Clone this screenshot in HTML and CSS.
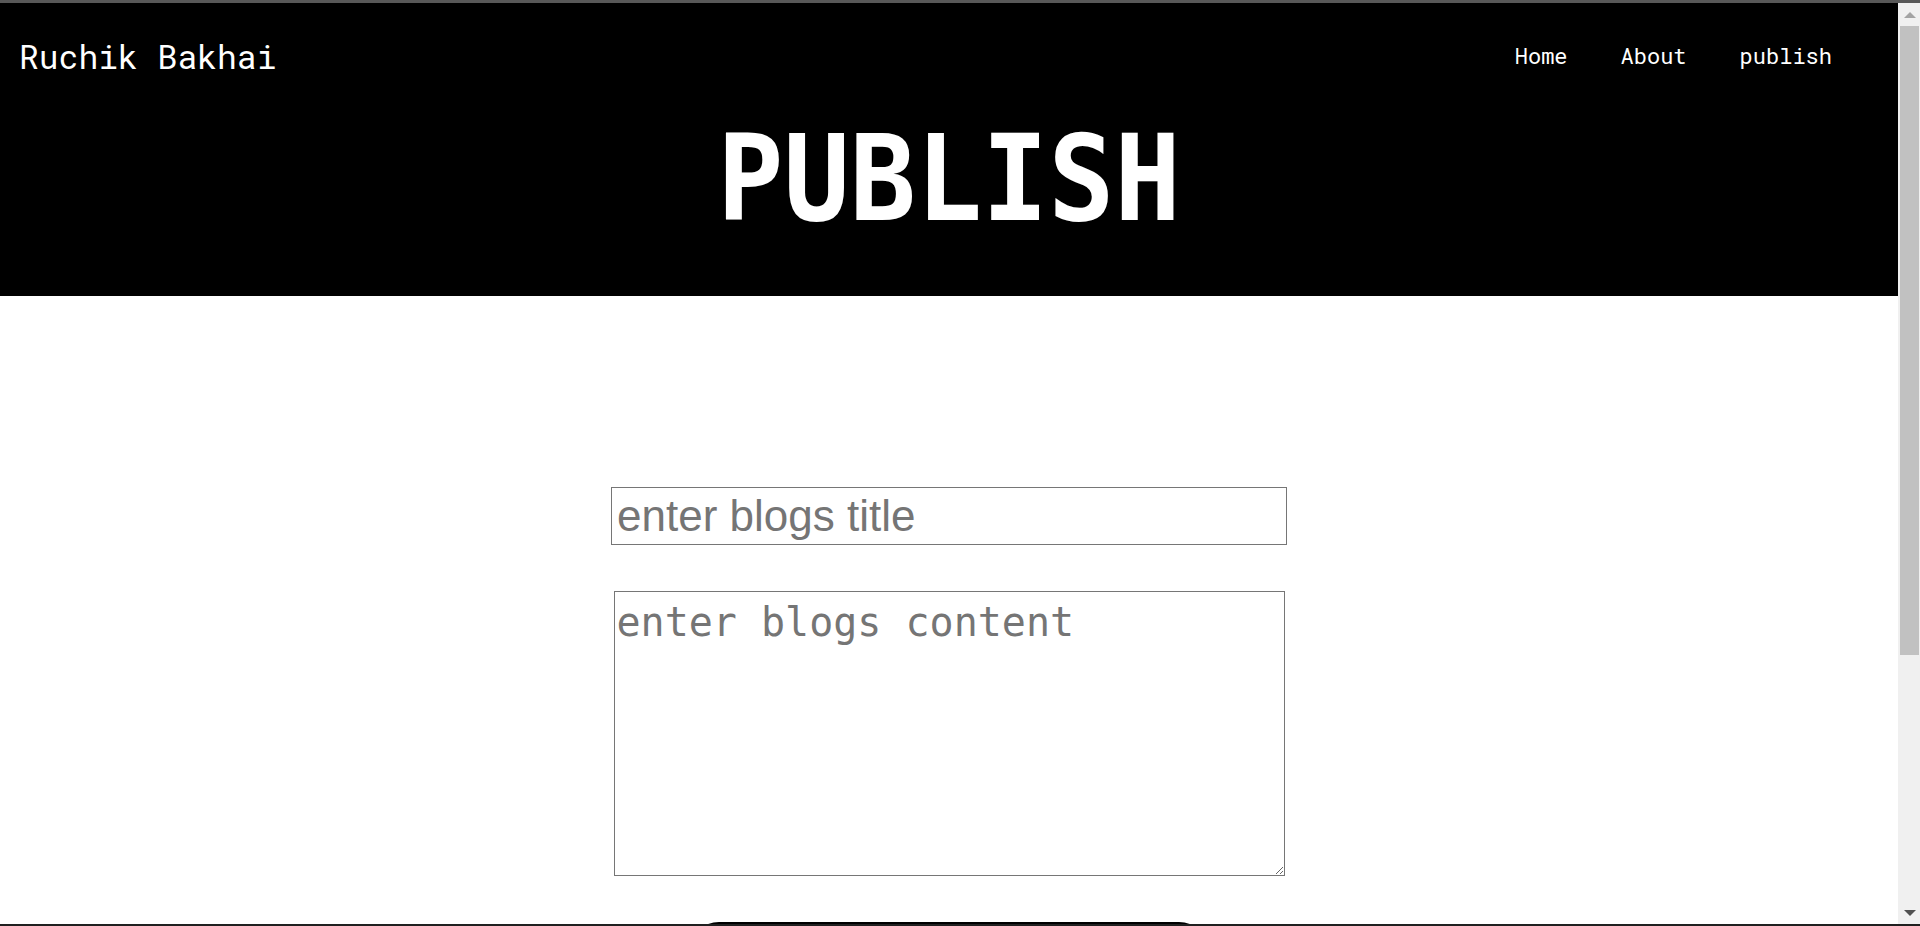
FILE: index.html
```html
<!DOCTYPE html>
<html lang="en">
<head>
<meta charset="utf-8">
<title>Publish</title>
<link rel="stylesheet" href="styles.css">
</head>
<body>
<div class="frame-top"></div>
<div class="window">
  <div class="page">
    <header class="hero">
      <nav class="navbar">
        <a class="logo" href="#">Ruchik Bakhai</a>
        <ul class="links">
          <li><a href="#">Home</a></li>
          <li><a href="#">About</a></li>
          <li><a href="#">publish</a></li>
        </ul>
      </nav>
      <h1 class="hero-title">PUBLISH</h1>
    </header>
    <main class="editor">
      <input class="title-input" type="text" placeholder="enter blogs title">
      <textarea class="content-input" placeholder="enter blogs content"></textarea>
      <button class="publish-btn" aria-label="publish"></button>
    </main>
  </div>
  <div class="scrollbar">
    <div class="sb-btn"><span class="arrow-up"></span></div>
    <div class="sb-thumb"></div>
    <div class="sb-track"></div>
    <div class="sb-btn"><span class="arrow-down"></span></div>
  </div>
</div>
<div class="frame-bottom"></div>
</body>
</html>
```

FILE: styles.css
```css
* { box-sizing: border-box; }

html, body {
  margin: 0;
  padding: 0;
  height: 926px;
  overflow: hidden;
  background: #ffffff;
}

body {
  display: flex;
  flex-direction: column;
  font-family: "Roboto Mono", "DejaVu Sans Mono", monospace;
}

.frame-top {
  height: 3px;
  background: #585858;
  flex: none;
}

.frame-bottom {
  height: 2px;
  background: #202020;
  flex: none;
}

.window {
  flex: 1;
  min-height: 0;
  display: flex;
}

.page {
  flex: 1;
  min-width: 0;
  overflow: hidden;
  background: #ffffff;
}

.hero {
  background: #000000;
  height: 293px;
  display: flex;
  flex-direction: column;
}

.navbar {
  height: 105px;
  display: flex;
  align-items: center;
  justify-content: space-between;
  padding: 0 66px 0 19px;
}

.logo {
  color: #ffffff;
  text-decoration: none;
  font-size: 33px;
  font-weight: 400;
}

.links {
  list-style: none;
  margin: 0;
  padding: 0;
  display: flex;
  gap: 53px;
}

.links a {
  color: #ffffff;
  text-decoration: none;
  font-size: 22px;
  font-weight: 400;
}

.hero-title {
  margin: 19px 0 0;
  text-align: center;
  color: #ffffff;
  font-family: "DejaVu Sans Mono", monospace;
  font-weight: 700;
  font-size: 110px;
  line-height: 110px;
  transform: scaleY(1.08);
  transform-origin: 50% 85%;
}

.editor {
  display: flex;
  flex-direction: column;
  align-items: center;
  padding-top: 191px;
}

.title-input {
  width: 676px;
  height: 58px;
  border: 1px solid #767676;
  border-radius: 0;
  padding: 1px 5px;
  font-family: "Liberation Sans", Arial, sans-serif;
  font-size: 44px;
  color: #000;
  outline: none;
}

.title-input::placeholder {
  color: #757575;
}

.content-input {
  margin-top: 46px;
  width: 671px;
  height: 285px;
  border: 1px solid #767676;
  border-radius: 0;
  padding: 7px 2px 2px 2px;
  font-family: "DejaVu Sans Mono", monospace;
  font-size: 40px;
  color: #000;
  outline: none;
  resize: both;
}

.content-input::placeholder {
  color: #757575;
}

.publish-btn {
  margin-top: 46px;
  width: 520px;
  height: 60px;
  border: none;
  border-radius: 30px;
  background: #000000;
}

.scrollbar {
  width: 22px;
  flex: none;
  background: #f0f0f0;
  display: flex;
  flex-direction: column;
}

.sb-btn {
  height: 23px;
  display: flex;
  align-items: center;
  justify-content: center;
  flex: none;
}

.arrow-up {
  width: 0;
  height: 0;
  border-left: 6px solid transparent;
  border-right: 6px solid transparent;
  border-bottom: 6px solid #a3a3a3;
  margin-left: 1px;
}

.arrow-down {
  width: 0;
  height: 0;
  border-left: 6px solid transparent;
  border-right: 6px solid transparent;
  border-top: 6px solid #505050;
  margin-left: 1px;
}

.sb-thumb {
  height: 629px;
  margin: 0 1px 0 2px;
  background: #c1c1c1;
  flex: none;
}

.sb-track {
  flex: 1;
}
```
